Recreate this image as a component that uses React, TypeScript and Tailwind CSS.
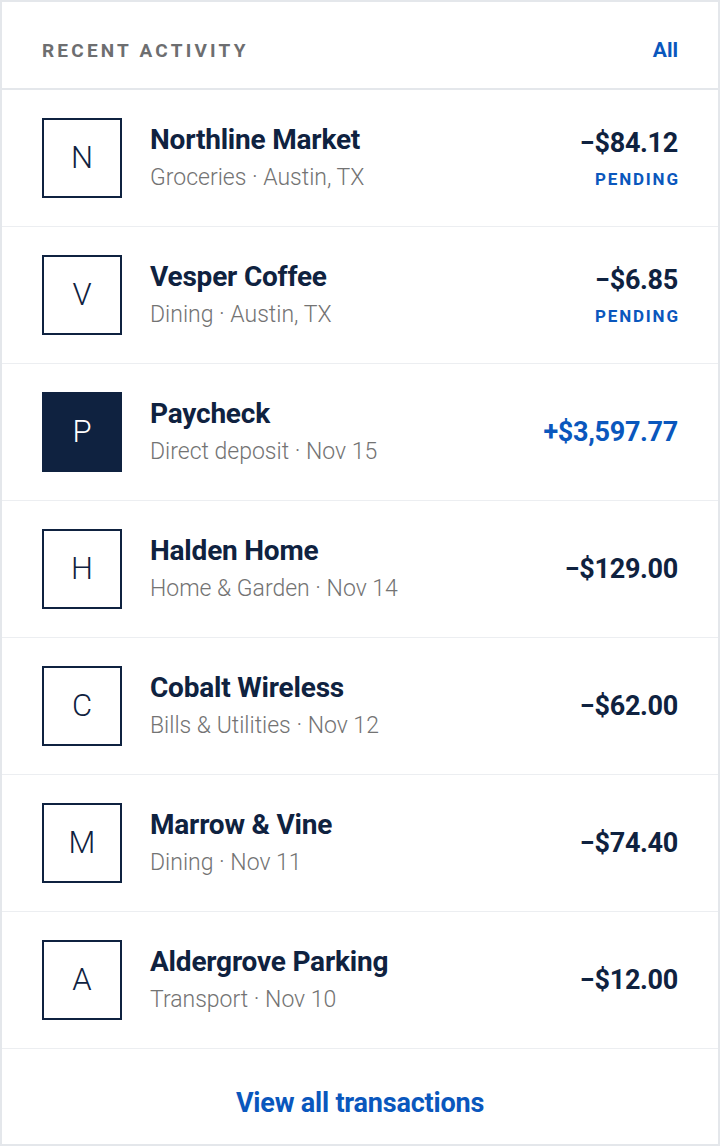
import React from 'react'

type Txn = {
  letter: string
  name: string
  meta: string
  amount: string
  pending?: boolean
  credit?: boolean
}

const txns: Txn[] = [
  { letter: 'N', name: 'Northline Market', meta: 'Groceries · Austin, TX', amount: '−$84.12', pending: true },
  { letter: 'V', name: 'Vesper Coffee', meta: 'Dining · Austin, TX', amount: '−$6.85', pending: true },
  { letter: 'P', name: 'Paycheck', meta: 'Direct deposit · Nov 15', amount: '+$3,597.77', credit: true },
  { letter: 'H', name: 'Halden Home', meta: 'Home & Garden · Nov 14', amount: '−$129.00' },
  { letter: 'C', name: 'Cobalt Wireless', meta: 'Bills & Utilities · Nov 12', amount: '−$62.00' },
  { letter: 'M', name: 'Marrow & Vine', meta: 'Dining · Nov 11', amount: '−$74.40' },
  { letter: 'A', name: 'Aldergrove Parking', meta: 'Transport · Nov 10', amount: '−$12.00' },
]

const TxnRow = ({ t }: { t: Txn }) => {
  return (
    <div className="flex items-center px-[40px] py-[28px] border-b-[1.5px] border-[#eceef1]">
      <div
        className={
          t.credit
            ? 'flex items-center justify-center size-[80px] bg-[#0f2240] text-white text-[31px] font-light'
            : 'flex items-center justify-center size-[80px] border-2 border-[#0f2240] text-[#0f2240] text-[31px] font-light'
        }
      >
        {t.letter}
      </div>
      <div className="flex flex-col ml-[28px] flex-1">
        <p className="text-[28px] font-bold text-[#0f2240] leading-[32px] tracking-[-0.2px]">{t.name}</p>
        <p className="text-[23px] font-light text-[#737373] leading-[28px] mt-[8px]">{t.meta}</p>
      </div>
      <div className="flex flex-col items-end">
        <p
          className={
            t.credit
              ? 'text-[27px] font-bold text-[#0a57bd] leading-[32px] tracking-[-0.3px]'
              : 'text-[27px] font-bold text-[#0f2240] leading-[32px] tracking-[-0.3px]'
          }
        >
          {t.amount}
        </p>
        {t.pending && (
          <p className="text-[17px] font-bold text-[#0a57bd] tracking-[1.8px] mr-[-1.8px] leading-[20px] mt-[10px]">
            PENDING
          </p>
        )}
      </div>
    </div>
  )
}

const App = () => {
  return (
    <div
      className="w-[720px] h-[1146px] bg-white border-2 border-[#e4e7eb]"
      style={{ fontFamily: 'Roboto, "Liberation Sans", sans-serif' }}
    >
      <div className="flex items-center justify-between h-[88px] pt-[12px] px-[40px] border-b-2 border-[#e4e7eb]">
        <p className="text-[19px] font-bold text-[#6d6e70] tracking-[3.2px]">RECENT ACTIVITY</p>
        <p className="text-[21px] font-bold text-[#0a57bd]">All</p>
      </div>
      {txns.map((t) => (
        <TxnRow key={t.name} t={t} />
      ))}
      <div className="flex items-center justify-center h-[92px] pt-[16px]">
        <p className="text-[27px] font-bold text-[#0a57bd] tracking-[-0.2px]">View all transactions</p>
      </div>
    </div>
  )
}

export default App
